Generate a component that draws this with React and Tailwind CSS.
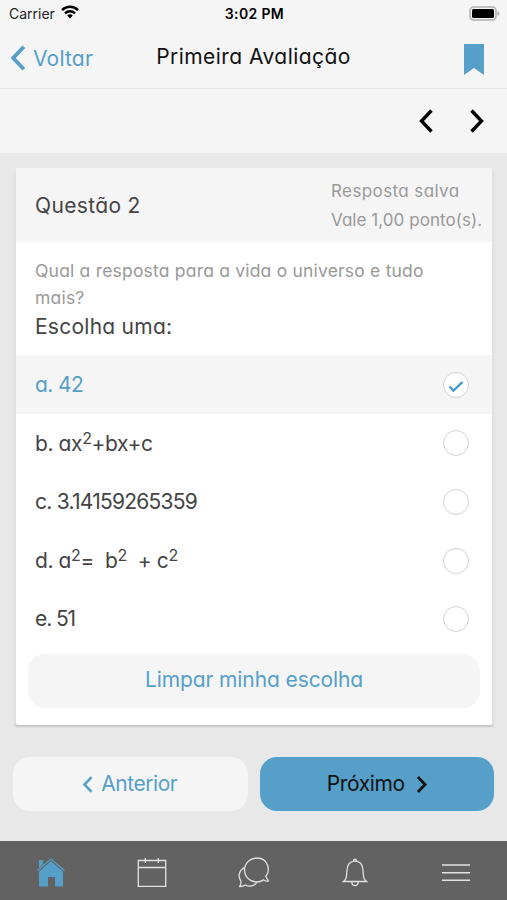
import { useState } from "react";

const options = [
  { id: "a", label: "a. 42", spacing: "tracking-[-0.6px]" },
  { id: "b", label: <>b. ax<Sup />+bx+c</>, spacing: "tracking-[-0.4px]" },
  { id: "c", label: "c. 3.14159265359", spacing: "tracking-[-0.75px]" },
  { id: "d", label: <>d. a<Sup />=&nbsp; b<Sup />&nbsp; + c<Sup /></>, spacing: "tracking-[-0.4px]" },
  { id: "e", label: "e. 51", spacing: "tracking-[-1.1px]" },
];

function Sup() {
  return <span className="relative -top-[7px] text-[16px]">2</span>;
}

function Chevron({ right, className, width = 3 }) {
  return (
    <svg viewBox="0 0 14 24" className={className} fill="none" stroke="currentColor" strokeWidth={width}>
      <path d={right ? "M2 1.5 12 12 2 22.5" : "M12 1.5 2 12 12 22.5"} />
    </svg>
  );
}

function StatusBar() {
  return (
    <div className="grid h-[26px] grid-cols-3 items-center pl-[9px] pr-[7px] text-black">
      <div className="flex items-center gap-1.5 text-[14px] text-[#222]">
        <span className="[font-feature-settings:normal]">Carrier</span>
        <svg viewBox="0 0 18 14" className="h-3.5 w-[18px] -translate-y-px" fill="none" stroke="#000" strokeWidth="2.4">
          <path d="M1 5.1a11.4 11.4 0 0 1 16 0" />
          <path d="M4 8.3a7.1 7.1 0 0 1 10 0" />
          <path d="M9 13.6 6.2 10.6a4 4 0 0 1 5.6 0Z" fill="#000" stroke="none" />
        </svg>
      </div>
      <div className="text-center text-[14px] font-semibold tracking-[0.35px]">3:02 PM</div>
      <svg viewBox="0 0 31 15" className="h-[15px] w-[31px] justify-self-end">
        <rect x="1" y="1" width="26" height="13" rx="3.5" fill="#f5f5f5" stroke="#b0b0b0" strokeWidth="1.5" />
        <rect x="3" y="3" width="22" height="9" rx="1.5" fill="#000" />
        <path d="M28.5 5v5q2-1 2-2.5t-2-2.5Z" fill="#b0b0b0" />
      </svg>
    </div>
  );
}

function Radio({ checked }) {
  return (
    <span className="flex h-[26px] w-[26px] items-center justify-center rounded-full border-[1.5px] border-[#d2d2d2] bg-white">
      {checked && (
        <svg viewBox="0 0 16 14" className="mt-[3px] h-3.5 w-4" fill="none" stroke="#4299c9" strokeWidth="2.4">
          <path d="m1.5 7.5 4 4L14.5 3" />
        </svg>
      )}
    </span>
  );
}

function TabBar() {
  return (
    <nav className="grid h-[59px] grid-cols-5 items-center justify-items-center bg-[#626262] pt-1 text-[#e2e2e2]">
      <svg viewBox="0 0 28 30" className="h-[30px] w-7 text-[#559fc8]" fill="currentColor">
        <path d="M2 2h4v4L2 10Z" />
        <path d="M.5 12.5 14 1l13.5 11.5" fill="none" stroke="currentColor" strokeWidth="1.3" />
        <path d="M2 13.5 14 3.3l12 10.2V28.5h-8V19h-7v9.5H2Z" />
      </svg>
      <svg viewBox="0 0 30 30" className="h-[30px] w-[30px]" fill="none" stroke="currentColor" strokeWidth="1.3">
        <path d="M1.3 2.5h27.4v25.9H1.3ZM1.3 9.5h27.4M8.3 0v5M21.3 0v5" />
      </svg>
      <svg viewBox="0 0 32 32" className="h-8 w-8 translate-x-px" fill="none" stroke="currentColor" strokeWidth="1.3">
        <path d="M27.8 19.5C33 13 29.8 1 19 1 11.7 1 6.5 6.6 6.5 13s5.2 12 12.2 12c2.7 0 5-.8 7-2.1 1.3 1 2.8 1.4 4.7 1.3-.5-1.7-1.7-3-2.6-4.7Z" />
        <path d="M6.2 10.5C.8 13.9-.3 19.5 3 24.3c.2 2-.5 3.7-1.3 5.2 2.2.1 4-.3 5.6-1.5 4.5 2.3 9.2 1.1 11.5-2.5" />
      </svg>
      <svg viewBox="0 0 26 30" className="h-[30px] w-[26px]" fill="none" stroke="currentColor" strokeWidth="1.3">
        <path d="M1.5 23.5c3-2.3 3-4.2 3.4-10.5C5.2 6.4 8 3.2 13 3.2S20.8 6.4 21.1 13c.4 6.3.4 8.2 3.4 10.5ZM9.7 23.5c.3 5.5 6.3 5.5 6.6 0M11.5 3c0-2.5 3-2.5 3 0" />
      </svg>
      <svg viewBox="0 0 28 20" className="h-5 w-7" fill="none" stroke="currentColor" strokeWidth="1.5">
        <path d="M0 2h28M0 9.7h28M0 17.2h28" />
      </svg>
    </nav>
  );
}

export default function App() {
  const [selected, setSelected] = useState("a");

  return (
    <div className="flex h-[900px] w-[507px] flex-col overflow-hidden bg-[#e8e8e8] font-['Inter',sans-serif] text-[21px] text-[#444] [font-feature-settings:'cv11']">
      <header className="h-[89px] shrink-0 border-b-[1.5px] border-[#e2e2e2] bg-[#f5f5f5]">
        <StatusBar />
        <div className="mt-0.5 grid h-[60px] grid-cols-[120px_1fr_120px] items-center">
          <button className="flex items-center gap-[7px] pl-[11px] text-[#559fc8]">
            <Chevron className="h-[26px] w-[15px]" width={3.6} />
            <span className="pt-0.5 tracking-[0.2px]">Voltar</span>
          </button>
          <h1 className="-mt-0.5 text-center tracking-[0.45px] text-[#111]">Primeira Avaliação</h1>
          <svg viewBox="0 0 20 31" className="mr-[23px] mt-[3px] h-[31px] w-5 justify-self-end" fill="#559fc8">
            <path d="M0 0h20v31l-10-7-10 7Z" />
          </svg>
        </div>
      </header>

      <div className="flex h-16 shrink-0 items-center justify-end gap-[35px] bg-[#f5f5f5] pr-[23px] text-black">
        <Chevron className="h-6 w-[15px]" width={3.4} />
        <Chevron right className="h-6 w-[15px]" width={3.4} />
      </div>

      <main className="flex-1 pl-[15px] pr-[14px] pt-[15px]">
        <section className="flex h-[557px] flex-col rounded-[3px] border-x border-[#e2e2e2] bg-white shadow-[0_2px_2px_#c4c4c4]">
          <div className="flex h-[74px] shrink-0 items-center justify-between bg-[#f5f5f5] pl-[19px] pr-[8px]">
            <h2 className="pt-px tracking-[0.35px]">Questão 2</h2>
            <div className="w-[153px] whitespace-nowrap pt-0.5 text-[17px] leading-[29px] text-[#999]">
              <p className="tracking-[0.4px]">Resposta salva</p>
              <p className="tracking-[0.05px]">Vale 1,00 ponto(s).</p>
            </div>
          </div>

          <div className="h-[113px] shrink-0 px-[19px] pt-[15px]">
            <p className="w-[420px] text-[17.5px] leading-[27px] tracking-[0.2px] text-[#999]">
              Qual a resposta para a vida o universo e tudo<br />mais?
            </p>
            <p className="leading-[31px] tracking-[0.25px]">Escolha uma:</p>
          </div>

          <ul>
            {options.map((o) => (
              <li
                key={o.id}
                onClick={() => setSelected(o.id)}
                className={`flex h-[58.6px] items-center justify-between pl-[19px] pr-[23px] pt-px ${
                  selected === o.id ? "bg-[#f5f5f5] text-[#559fc8]" : ""
                }`}
              >
                <span className={o.spacing}>{o.label}</span>
                <Radio checked={selected === o.id} />
              </li>
            ))}
          </ul>

          <button
            onClick={() => setSelected(null)}
            className="mx-3 mt-[6px] h-[54px] shrink-0 rounded-[17px] bg-[#f5f5f5] pb-0.5 tracking-[-0.1px] text-[#559fc8]"
          >
            Limpar minha escolha
          </button>
        </section>

        <div className="-ml-[2px] -mr-[1px] mt-8 grid grid-cols-2 gap-3">
          <button className="flex h-[54px] items-center justify-center gap-2 rounded-[17px] bg-[#f5f5f5] tracking-[-0.45px] text-[#559fc8]">
            <Chevron className="h-[17px] w-2.5" width={3.6} />
            Anterior
          </button>
          <button className="flex h-[54px] items-center justify-center gap-[11px] rounded-[17px] bg-[#559fc8] tracking-[-0.4px] text-[#111]">
            Próximo
            <Chevron right className="h-[17px] w-[11px]" width={4} />
          </button>
        </div>
      </main>

      <TabBar />
    </div>
  );
}
